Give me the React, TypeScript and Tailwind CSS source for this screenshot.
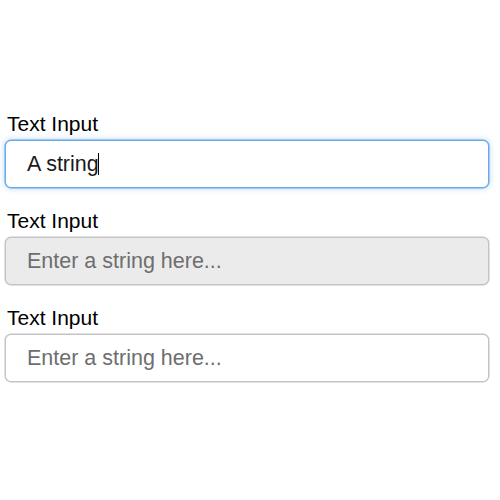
import React from "react";

const font = { fontFamily: '"Liberation Sans", Arial, sans-serif' };

function Label() {
  return <div className="text-[21px] leading-[25px] text-black">Text Input</div>;
}

export default function App() {
  return (
    <div className="w-[500px] h-[500px] bg-white pt-[111px] pl-[5px] pr-[11px]" style={font}>
      <div className="flex flex-col gap-[20px]">
        <div className="flex flex-col gap-[4px]">
          <div className="pl-[2px]"><Label /></div>
          <div className="h-[48px] rounded-[6px] border border-[#6aaae8] shadow-[0_0_0_0.5px_#6aaae8,0_0_6px_rgba(102,170,233,0.55)] bg-white flex items-center pl-[21px] text-[21.5px] text-[#1a1a1a]">
            <span>A string</span>
            <span className="inline-block w-[1px] h-[22px] bg-black -ml-[1px]" />
          </div>
        </div>
        <div className="flex flex-col gap-[4px]">
          <div className="pl-[2px]"><Label /></div>
          <div className="h-[48px] rounded-[6px] border border-[#c4c4c4] shadow-[0_0_0_0.5px_#c4c4c4] bg-[#ebebeb] flex items-center pl-[21px] text-[21.5px] text-[#6e6e6e]">
            Enter a string here...
          </div>
        </div>
        <div className="flex flex-col gap-[4px]">
          <div className="pl-[2px]"><Label /></div>
          <div className="h-[48px] rounded-[6px] border border-[#c4c4c4] shadow-[0_0_0_0.5px_#c4c4c4] bg-white flex items-center pl-[21px] text-[21.5px] text-[#6e6e6e]">
            Enter a string here...
          </div>
        </div>
      </div>
    </div>
  );
}
